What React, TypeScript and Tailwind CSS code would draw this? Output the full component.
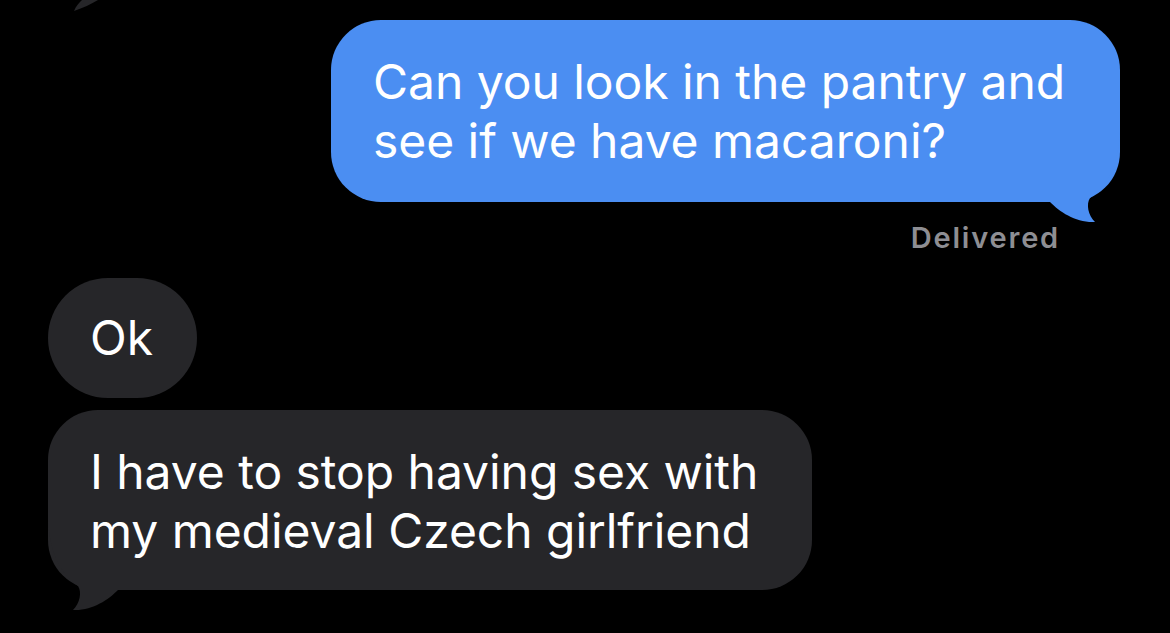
export default function App() {
  return (
    <div
      className="relative w-[1170px] h-[633px] overflow-hidden bg-black text-white"
      style={{ fontFamily: 'Inter, "Noto Sans", "Liberation Sans", sans-serif' }}
    >
      <svg className="absolute left-0 top-0" width="120" height="20" viewBox="0 0 120 20">
        <path d="M82,0 L98,0 C91,4 83,8 74,11 C76,6 79,3 82,0 Z" fill="#262629" />
      </svg>
      <div className="flex flex-col pt-[20px]">
        <div className="flex justify-end pr-[50px]">
          <div className="relative w-[789px] h-[182px] rounded-[50px] bg-[#4b8ef2] pl-[42px] pt-[32px] text-[48px] leading-[59px] tracking-[-0.05px]">
            <svg className="absolute left-[719px] top-[112px]" width="80" height="100" viewBox="0 0 80 100">
              <path d="M70,0 C68,36 56,54 40,66 C36,72 38,83 45,90 C26,91 10,80 0,70 L0,0 Z" fill="#4b8ef2" />
            </svg>
            <div className="relative whitespace-nowrap">Can you look in the pantry and</div>
            <div className="relative whitespace-nowrap">see if we have macaroni?</div>
          </div>
        </div>
        <div className="flex justify-end pr-[110px] mt-[18px] h-[36px] items-center text-[29px] font-semibold tracking-[1.8px] text-[#8e8e93]">
          Delivered
        </div>
        <div className="pl-[48px] mt-[22px]">
          <div className="w-[149px] h-[120px] rounded-[60px] bg-[#262629] flex items-center pl-[42px] text-[48px]">
            Ok
          </div>
        </div>
        <div className="pl-[48px] mt-[12px]">
          <div className="relative w-[764px] h-[180px] rounded-[50px] bg-[#262629] pl-[42px] pt-[32px] text-[48px] leading-[59px] tracking-[-0.05px]">
            <svg className="absolute left-0 top-[110px]" width="80" height="100" viewBox="0 0 80 100">
              <path d="M0,0 C2,36 14,54 30,66 C34,72 32,83 25,90 C44,91 60,80 70,70 L70,0 Z" fill="#262629" />
            </svg>
            <div className="relative whitespace-nowrap">I have to stop having sex with</div>
            <div className="relative whitespace-nowrap">my medieval Czech girlfriend</div>
          </div>
        </div>
      </div>
    </div>
  );
}
